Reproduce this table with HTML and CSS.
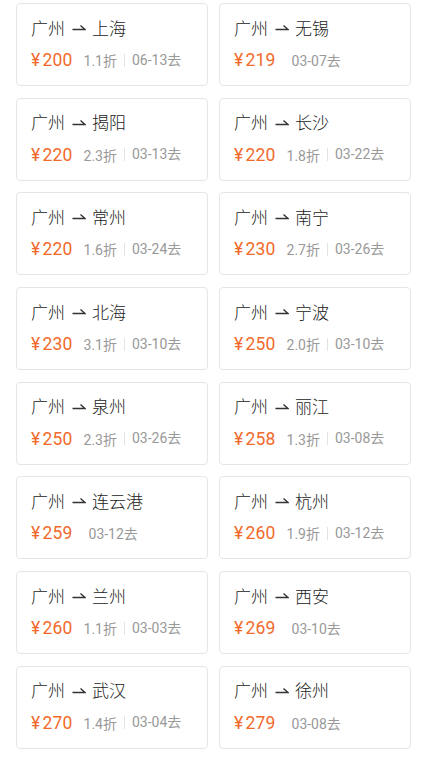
FILE: index.html
```html
<!DOCTYPE html>
<html lang="zh-CN">
<head>
<meta charset="utf-8">
<title>特价机票</title>
<link rel="stylesheet" href="styles.css">
</head>
<body>
<div class="grid">
  <div class="card"><div class="route">广州<svg class="arrow" viewBox="0 0 14 8"><path d="M0.5 6.5H13L8.5 2.5"/></svg>上海</div><div class="info"><span class="price"><span class="yen">¥</span>200</span><span class="disc">1.1折</span><span class="date sep">06-13去</span></div></div>
  <div class="card"><div class="route">广州<svg class="arrow" viewBox="0 0 14 8"><path d="M0.5 6.5H13L8.5 2.5"/></svg>无锡</div><div class="info"><span class="price"><span class="yen">¥</span>219</span><span class="date">03-07去</span></div></div>
  <div class="card"><div class="route">广州<svg class="arrow" viewBox="0 0 14 8"><path d="M0.5 6.5H13L8.5 2.5"/></svg>揭阳</div><div class="info"><span class="price"><span class="yen">¥</span>220</span><span class="disc">2.3折</span><span class="date sep">03-13去</span></div></div>
  <div class="card"><div class="route">广州<svg class="arrow" viewBox="0 0 14 8"><path d="M0.5 6.5H13L8.5 2.5"/></svg>长沙</div><div class="info"><span class="price"><span class="yen">¥</span>220</span><span class="disc">1.8折</span><span class="date sep">03-22去</span></div></div>
  <div class="card"><div class="route">广州<svg class="arrow" viewBox="0 0 14 8"><path d="M0.5 6.5H13L8.5 2.5"/></svg>常州</div><div class="info"><span class="price"><span class="yen">¥</span>220</span><span class="disc">1.6折</span><span class="date sep">03-24去</span></div></div>
  <div class="card"><div class="route">广州<svg class="arrow" viewBox="0 0 14 8"><path d="M0.5 6.5H13L8.5 2.5"/></svg>南宁</div><div class="info"><span class="price"><span class="yen">¥</span>230</span><span class="disc">2.7折</span><span class="date sep">03-26去</span></div></div>
  <div class="card"><div class="route">广州<svg class="arrow" viewBox="0 0 14 8"><path d="M0.5 6.5H13L8.5 2.5"/></svg>北海</div><div class="info"><span class="price"><span class="yen">¥</span>230</span><span class="disc">3.1折</span><span class="date sep">03-10去</span></div></div>
  <div class="card"><div class="route">广州<svg class="arrow" viewBox="0 0 14 8"><path d="M0.5 6.5H13L8.5 2.5"/></svg>宁波</div><div class="info"><span class="price"><span class="yen">¥</span>250</span><span class="disc">2.0折</span><span class="date sep">03-10去</span></div></div>
  <div class="card"><div class="route">广州<svg class="arrow" viewBox="0 0 14 8"><path d="M0.5 6.5H13L8.5 2.5"/></svg>泉州</div><div class="info"><span class="price"><span class="yen">¥</span>250</span><span class="disc">2.3折</span><span class="date sep">03-26去</span></div></div>
  <div class="card"><div class="route">广州<svg class="arrow" viewBox="0 0 14 8"><path d="M0.5 6.5H13L8.5 2.5"/></svg>丽江</div><div class="info"><span class="price"><span class="yen">¥</span>258</span><span class="disc">1.3折</span><span class="date sep">03-08去</span></div></div>
  <div class="card"><div class="route">广州<svg class="arrow" viewBox="0 0 14 8"><path d="M0.5 6.5H13L8.5 2.5"/></svg>连云港</div><div class="info"><span class="price"><span class="yen">¥</span>259</span><span class="date">03-12去</span></div></div>
  <div class="card"><div class="route">广州<svg class="arrow" viewBox="0 0 14 8"><path d="M0.5 6.5H13L8.5 2.5"/></svg>杭州</div><div class="info"><span class="price"><span class="yen">¥</span>260</span><span class="disc">1.9折</span><span class="date sep">03-12去</span></div></div>
  <div class="card"><div class="route">广州<svg class="arrow" viewBox="0 0 14 8"><path d="M0.5 6.5H13L8.5 2.5"/></svg>兰州</div><div class="info"><span class="price"><span class="yen">¥</span>260</span><span class="disc">1.1折</span><span class="date sep">03-03去</span></div></div>
  <div class="card"><div class="route">广州<svg class="arrow" viewBox="0 0 14 8"><path d="M0.5 6.5H13L8.5 2.5"/></svg>西安</div><div class="info"><span class="price"><span class="yen">¥</span>269</span><span class="date">03-10去</span></div></div>
  <div class="card"><div class="route">广州<svg class="arrow" viewBox="0 0 14 8"><path d="M0.5 6.5H13L8.5 2.5"/></svg>武汉</div><div class="info"><span class="price"><span class="yen">¥</span>270</span><span class="disc">1.4折</span><span class="date sep">03-04去</span></div></div>
  <div class="card"><div class="route">广州<svg class="arrow" viewBox="0 0 14 8"><path d="M0.5 6.5H13L8.5 2.5"/></svg>徐州</div><div class="info"><span class="price"><span class="yen">¥</span>279</span><span class="date">03-08去</span></div></div>
</div>
</body>
</html>
```
FILE: styles.css
```css
* { box-sizing: border-box; }
html, body { margin: 0; padding: 0; background: #fff; }
body {
  font-family: Roboto, "Noto Sans CJK SC", sans-serif;
  color: #333;
}
.grid {
  display: grid;
  grid-template-columns: 192px 192px;
  column-gap: 11px;
  row-gap: 11.7px;
  padding: 3px 0 0 16px;
}
.card {
  height: 83px;
  border: 1px solid #e6e6e6;
  border-radius: 4px;
  padding: 11px 0 0 14px;
}
.route {
  display: flex;
  align-items: center;
  height: 24px;
  font-size: 17px;
  font-weight: 300;
  color: #222;
  font-family: "Noto Sans CJK SC", sans-serif;
}
.arrow {
  width: 14px;
  height: 8px;
  margin: 0 6px 0 7px;
  fill: none;
  stroke: #333;
  stroke-width: 1.4;
}
.info {
  display: flex;
  align-items: center;
  height: 24px;
  margin-top: 9px;
}
.price {
  font-size: 17.5px;
  color: #f26a2b;
  margin-right: 11px;
  letter-spacing: 0.2px;
}
.yen { margin-right: 2px; }
.disc, .date {
  font-size: 14px;
  color: #999;
}
.date { margin-left: 5px; }
.date.sep {
  margin-left: 7px;
  padding-left: 7px;
  border-left: 1px solid #e3e3e3;
  line-height: 13px;
}
```
